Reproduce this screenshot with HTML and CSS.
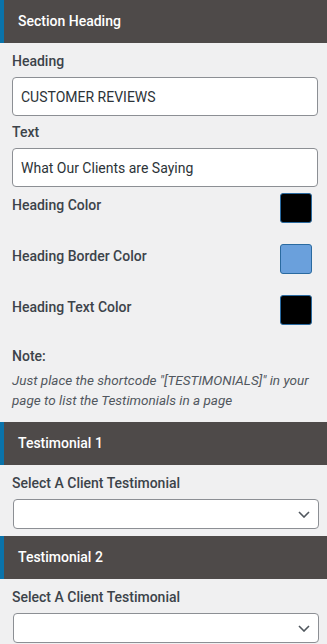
FILE: index.html
```html
<!DOCTYPE html>
<html lang="en">
<head>
    <meta charset="UTF-8">
    <meta name="viewport" content="width=device-width, initial-scale=1.0">
    <title>Testimonials Settings</title>
    <link rel="stylesheet" href="styles.css">
</head>
<body>

<div class="section-title">Section Heading</div>

<div class="panel panel-main">
    <label for="heading">Heading</label>
    <input type="text" id="heading" value="CUSTOMER REVIEWS">

    <label for="text">Text</label>
    <input type="text" id="text" value="What Our Clients are Saying">

    <div class="color-row">
        <span class="color-label">Heading Color</span>
        <span class="swatch" style="background-color: #000000;"></span>
    </div>
    <div class="color-row">
        <span class="color-label">Heading Border Color</span>
        <span class="swatch" style="background-color: #6aa0dc;"></span>
    </div>
    <div class="color-row">
        <span class="color-label">Heading Text Color</span>
        <span class="swatch" style="background-color: #000000;"></span>
    </div>

    <div class="note">
        <p class="note-title">Note:</p>
        <p class="note-text">Just place the shortcode "[TESTIMONIALS]" in your page to list the Testimonials in a page</p>
    </div>
</div>

<div class="section-title">Testimonial 1</div>
<div class="panel">
    <label class="select-label" for="testimonial1">Select A Client Testimonial</label>
    <div class="select">
        <select id="testimonial1"><option></option></select>
        <svg class="chevron" width="12" height="7" viewBox="0 0 12 7"><path d="M1 1l5 5 5-5" fill="none" stroke="#50575e" stroke-width="1.6"/></svg>
    </div>
</div>

<div class="section-title">Testimonial 2</div>
<div class="panel">
    <label class="select-label" for="testimonial2">Select A Client Testimonial</label>
    <div class="select">
        <select id="testimonial2"><option></option></select>
        <svg class="chevron" width="12" height="7" viewBox="0 0 12 7"><path d="M1 1l5 5 5-5" fill="none" stroke="#50575e" stroke-width="1.6"/></svg>
    </div>
</div>

</body>
</html>
```

FILE: styles.css
```css
body {
    font-family: Roboto, "Noto Sans", sans-serif;
    margin: 0;
    padding: 0;
    background-color: #f0f0f1;
    color: #3c434a;
    font-size: 14px;
}

.section-title {
    background-color: #4e4a49;
    border-left: 4px solid #0a73aa;
    color: #fff;
    font-weight: 500;
    font-size: 14px;
    height: 43px;
    line-height: 43px;
    padding-left: 14px;
}

.panel {
    padding: 8px 9px 7px 12px;
}

.panel-main {
    padding-bottom: 12px;
}

label {
    display: block;
    font-weight: 500;
    line-height: 20px;
    margin-bottom: 6px;
}

input {
    display: block;
    box-sizing: border-box;
    width: 100%;
    height: 39px;
    margin: 0 0 6px;
    padding: 0 8px;
    border: 1px solid #8c8f94;
    border-radius: 4px;
    background: #fff;
    font-family: inherit;
    font-size: 14px;
    color: #2c3338;
}

.color-row {
    display: flex;
    justify-content: space-between;
    align-items: center;
    height: 30px;
    margin-bottom: 21px;
    padding-right: 6px;
}

.color-label {
    font-weight: 500;
    margin-top: -6px;
}

.swatch {
    box-sizing: border-box;
    width: 32px;
    height: 30px;
    border: 1px solid #2a6aa0;
    border-radius: 3px;
}

.note {
    margin-top: 5px;
}

.note p {
    margin: 0;
}

.note-title {
    font-weight: 500;
    line-height: 20px;
    margin-bottom: 5px !important;
}

.note-text {
    font-style: italic;
    font-size: 13.5px;
    line-height: 19.5px;
    color: #50575e;
}

.select-label {
    margin-top: 0;
    margin-bottom: 6px;
}

.select {
    position: relative;
}

select {
    display: block;
    box-sizing: border-box;
    width: 100%;
    height: 30px;
    margin-left: 1px;
    border: 1px solid #8c8f94;
    border-radius: 4px;
    background: #fff;
    appearance: none;
}

.chevron {
    position: absolute;
    right: 8px;
    top: 12px;
}
```
